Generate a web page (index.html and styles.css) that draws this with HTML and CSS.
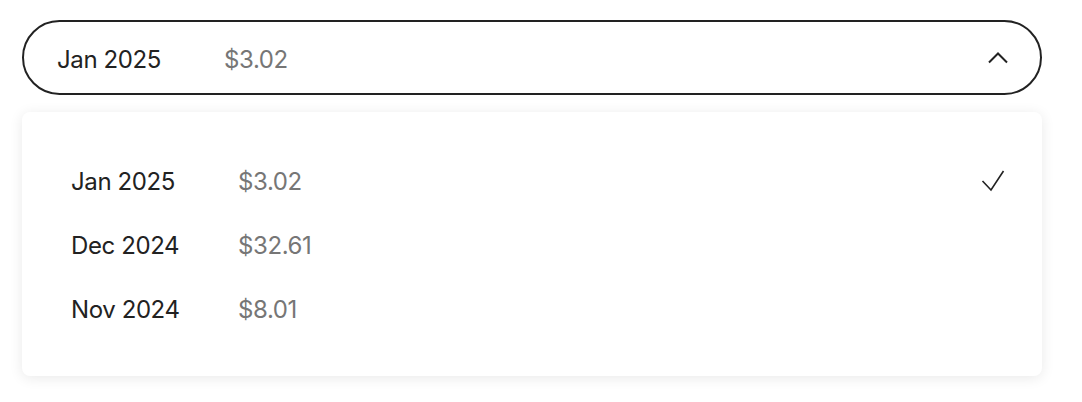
FILE: index.html
```html
<!DOCTYPE html>
<html lang="en">
<head>
<meta charset="utf-8">
<title>Billing period</title>
<link rel="stylesheet" href="styles.css">
</head>
<body>
<div class="picker">
  <button class="select" type="button">
    <span class="date">Jan 2025</span>
    <span class="price">$3.02</span>
    <svg class="chevron" width="20" height="12" viewBox="0 0 20 12" aria-hidden="true">
      <path d="M1 10.5 L10 1.5 L19 10.5" fill="none" stroke="#222" stroke-width="2"/>
    </svg>
  </button>
  <ul class="menu">
    <li class="option">
      <span class="date">Jan 2025</span>
      <span class="price">$3.02</span>
      <svg class="check" width="24" height="24" viewBox="0 0 24 24" aria-hidden="true">
        <path d="M1.5 12 L10 21 L22.5 2" fill="none" stroke="#222" stroke-width="1.6"/>
      </svg>
    </li>
    <li class="option">
      <span class="date">Dec 2024</span>
      <span class="price">$32.61</span>
    </li>
    <li class="option">
      <span class="date">Nov 2024</span>
      <span class="price">$8.01</span>
    </li>
  </ul>
</div>
</body>
</html>
```

FILE: styles.css
```css
* { box-sizing: border-box; }

html, body {
  margin: 0;
  background: #fff;
}

body {
  font-family: Inter, "Liberation Sans", sans-serif;
  color: #222;
  min-height: 402px;
}

.picker {
  padding: 20px 40px 26px 22px;
  display: flex;
  flex-direction: column;
}

.select {
  display: flex;
  align-items: center;
  height: 75px;
  width: 100%;
  padding: 3px 32px 0 33px;
  border: 2px solid #222;
  border-radius: 999px;
  background: #fff;
  font: inherit;
  color: inherit;
  text-align: left;
}

.select .chevron {
  margin-top: -3px;
}

.date {
  width: 167px;
  flex: none;
  font-size: 24px;
  letter-spacing: -0.4px;
  color: #222;
}

.price {
  flex: 1;
  font-size: 24px;
  letter-spacing: -0.4px;
  color: #767676;
}

.chevron, .check {
  flex: none;
  display: block;
}

.menu {
  list-style: none;
  margin: 17px 0 0;
  padding: 37px 37px 35px 49px;
  height: 264px;
  background: #fff;
  border-radius: 8px;
  box-shadow: 0 2px 14px rgba(0, 0, 0, 0.09);
}

.option {
  display: flex;
  align-items: center;
  height: 64px;
}
```
